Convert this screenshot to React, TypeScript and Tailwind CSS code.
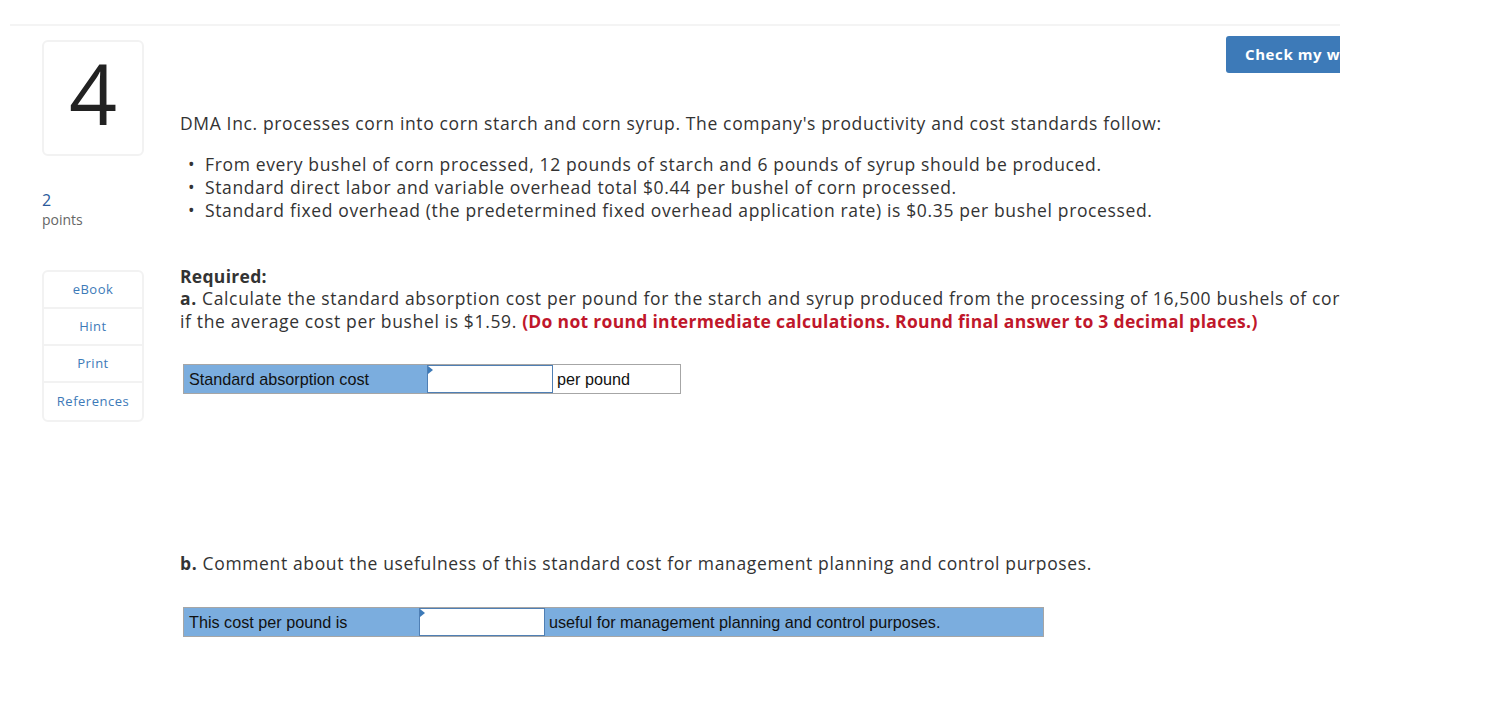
import React from 'react';

const sans = { fontFamily: '"Open Sans", Lato, sans-serif' };
const arial = { fontFamily: '"Liberation Sans", Arial, sans-serif' };

function SideLink({ label, last }: { label: string; last?: boolean }) {
  return (
    <div
      className={`flex h-[37px] items-center justify-center text-[13px] tracking-[0.5px] text-[#3d7ab8] ${
        last ? '' : 'border-b-2 border-[#f2f2f2]'
      }`}
    >
      {label}
    </div>
  );
}

function InputCell({ width }: { width: string }) {
  return (
    <div className={`relative h-full ${width} border border-[#4f7fb4] bg-white`}>
      <div className="absolute left-0 top-0 h-0 w-0 border-y-[4px] border-l-[5px] border-y-transparent border-l-[#3d7ab8]" />
    </div>
  );
}

export default function App() {
  return (
    <div className="min-h-[722px] bg-white text-[#333]" style={sans}>
      <div className="w-[1340px] overflow-hidden">
        <div className="ml-[10px] mt-[24px] h-[2px] bg-[#f4f4f4]" />
        <div className="flex">
          {/* left column */}
          <div className="ml-[42px] mt-[14px] w-[102px] shrink-0">
            <div className="flex h-[116px] items-center justify-center rounded-md border-2 border-[#f2f2f2]">
              <span className="text-[84px] font-medium leading-none text-[#222]" style={{ marginTop: '-10px' }}>
                4
              </span>
            </div>
            <div className="mt-[34px] text-[16px] leading-[20px] text-[#2a5a9b]">2</div>
            <div className="text-[14px] leading-[20px] text-[#666]">points</div>
            <div className="mt-[40px] rounded-md border-2 border-[#f2f2f2]">
              <SideLink label="eBook" />
              <SideLink label="Hint" />
              <SideLink label="Print" />
              <SideLink label="References" last />
            </div>
          </div>

          {/* main column */}
          <div className="ml-[36px] mt-[10px] min-w-0 flex-1 tracking-[0.64px]">
            <div className="flex justify-end">
              <button className="mr-[-36px] h-[37px] w-[150px] shrink-0 rounded-[3px] bg-[#3d7ab8] pl-[19px] text-left text-[15px] font-bold tracking-[0.6px] text-white">
                Check my work
              </button>
            </div>

            <p className="mt-[39px] text-[17.5px] leading-[23px]">
              DMA Inc. processes corn into corn starch and corn syrup. The company's productivity and cost
              standards follow:
            </p>

            <ul className="mt-[18px] text-[17.5px] leading-[23px]">
              <li className="flex">
                <span className="w-[25px] pl-[8px]">•</span>
                From every bushel of corn processed, 12 pounds of starch and 6 pounds of syrup should be produced.
              </li>
              <li className="flex">
                <span className="w-[25px] pl-[8px]">•</span>
                Standard direct labor and variable overhead total $0.44 per bushel of corn processed.
              </li>
              <li className="flex">
                <span className="w-[25px] pl-[8px]">•</span>
                Standard fixed overhead (the predetermined fixed overhead application rate) is $0.35 per bushel
                processed.
              </li>
            </ul>

            <div className="mt-[43px] text-[17.5px] font-bold leading-[22px] tracking-[0.3px]">Required:</div>
            <div className="whitespace-nowrap text-[17.5px] leading-[23px]">
              <div>
                <span className="font-bold">a.</span> Calculate the standard absorption cost per pound for the
                starch and syrup produced from the processing of 16,500 bushels of corn
              </div>
              <div>
                if the average cost per bushel is $1.59.{' '}
                <span className="font-bold tracking-[0.3px] text-[#c0172b]">
                  (Do not round intermediate calculations. Round final answer to 3 decimal places.)
                </span>
              </div>
            </div>

            <div
              className="ml-[3px] mt-[31px] flex h-[30px] w-[498px] border border-[#a6a6a6] text-[16.2px] tracking-normal text-[#111]"
              style={arial}
            >
              <div className="flex w-[243px] items-center bg-[#7badde] pl-[5px]">Standard absorption cost</div>
              <InputCell width="w-[126px]" />
              <div className="flex flex-1 items-center bg-white pl-[4px]">per pound</div>
            </div>

            <p className="mt-[158px] text-[17.5px] leading-[23px]">
              <span className="font-bold">b.</span> Comment about the usefulness of this standard cost for
              management planning and control purposes.
            </p>

            <div
              className="ml-[3px] mt-[32px] flex h-[30px] w-[861px] border border-[#a6a6a6] bg-[#7badde] text-[16.2px] tracking-normal text-[#111]"
              style={arial}
            >
              <div className="flex w-[235px] items-center pl-[5px]">This cost per pound is</div>
              <InputCell width="w-[126px]" />
              <div className="flex flex-1 items-center pl-[4px]">useful for management planning and control purposes.</div>
            </div>
          </div>
        </div>
      </div>
    </div>
  );
}
